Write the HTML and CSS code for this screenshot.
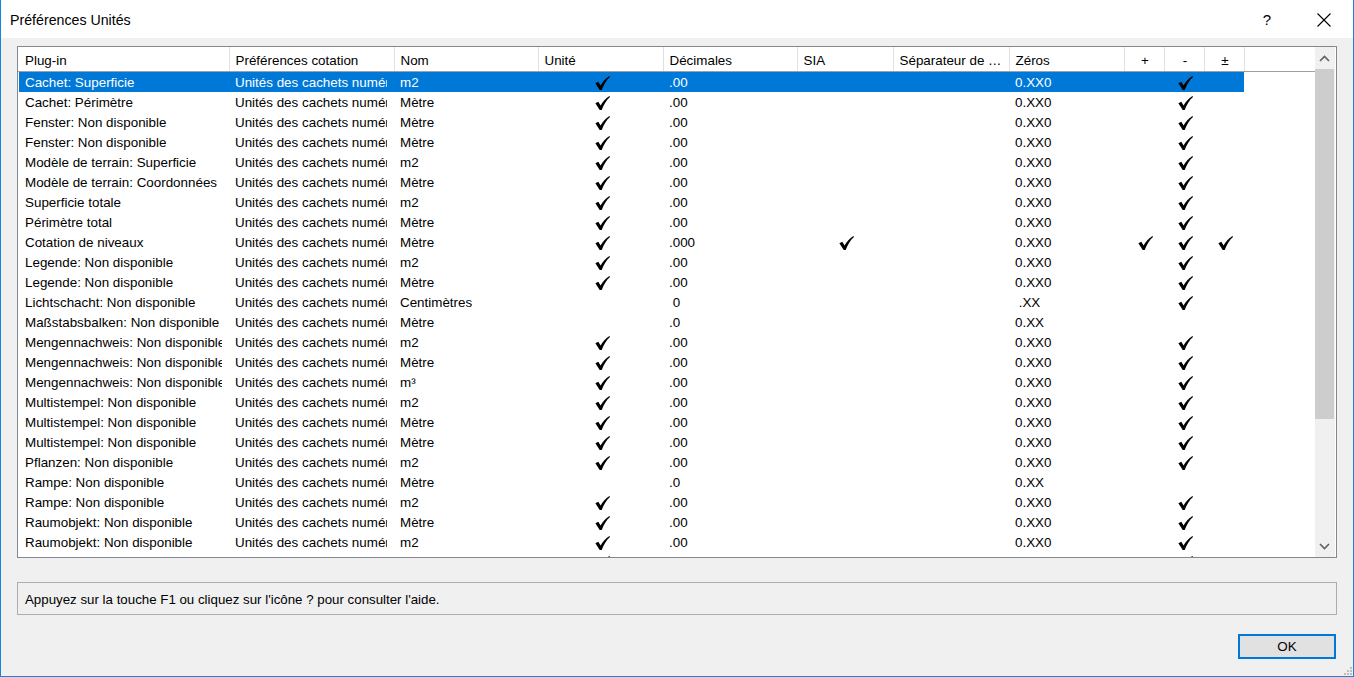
FILE: index.html
```html
<!DOCTYPE html>
<html lang="fr">
<head>
<meta charset="utf-8">
<title>Préférences Unités</title>
<link rel="stylesheet" href="styles.css">
</head>
<body>
<svg class="defs" width="0" height="0" aria-hidden="true">
  <symbol id="chk" viewBox="0 0 15 14">
    <path d="M0.4,7.3 L3.3,5.7 L5.6,9.4 C7.7,5.6 10.6,2.3 14.4,0 L15,0.9 C11.3,4.1 8.7,8.5 6.7,14 L4.7,14 Z"/>
  </symbol>
</svg>
<div class="window">
  <div class="titlebar">
    <span class="title">Préférences Unités</span>
    <span class="help">?</span>
    <svg class="close" width="14" height="14" viewBox="0 0 14 14"><path d="M0.5,0.5 L13.5,13.5 M13.5,0.5 L0.5,13.5" stroke="#000" stroke-width="1.1" fill="none"/></svg>
  </div>
  <div class="content">
    <div class="listbox">
      <div class="grid">
        <table class="tbl">
          <colgroup>
            <col class="c1"><col class="c2"><col class="c3"><col class="c4"><col class="c5"><col class="c6"><col class="c7"><col class="c8"><col class="c9"><col class="c9"><col class="c9"><col class="cf">
          </colgroup>
          <thead>
            <tr>
              <th>Plug-in</th><th>Préférences cotation</th><th>Nom</th><th>Unité</th><th>Décimales</th><th>SIA</th><th><span class="ell">Séparateur de milliers</span></th><th>Zéros</th><th class="ctr">+</th><th class="ctr">-</th><th class="ctr">±</th><th class="fill"></th>
            </tr>
          </thead>
          <tbody>
            <tr class="sel"><td><div>Cachet: Superficie</div></td><td><div>Unités des cachets numériques</div></td><td><div>m2</div></td><td class="k"><svg class="ck"><use href="#chk"/></svg></td><td><div>.00</div></td><td></td><td></td><td><div>0.XX0</div></td><td></td><td class="k"><svg class="ck"><use href="#chk"/></svg></td><td></td><td class="nf"></td></tr>
            <tr><td><div>Cachet: Périmètre</div></td><td><div>Unités des cachets numériques</div></td><td><div>Mètre</div></td><td class="k"><svg class="ck"><use href="#chk"/></svg></td><td><div>.00</div></td><td></td><td></td><td><div>0.XX0</div></td><td></td><td class="k"><svg class="ck"><use href="#chk"/></svg></td><td></td><td></td></tr>
            <tr><td><div>Fenster: Non disponible</div></td><td><div>Unités des cachets numériques</div></td><td><div>Mètre</div></td><td class="k"><svg class="ck"><use href="#chk"/></svg></td><td><div>.00</div></td><td></td><td></td><td><div>0.XX0</div></td><td></td><td class="k"><svg class="ck"><use href="#chk"/></svg></td><td></td><td></td></tr>
            <tr><td><div>Fenster: Non disponible</div></td><td><div>Unités des cachets numériques</div></td><td><div>Mètre</div></td><td class="k"><svg class="ck"><use href="#chk"/></svg></td><td><div>.00</div></td><td></td><td></td><td><div>0.XX0</div></td><td></td><td class="k"><svg class="ck"><use href="#chk"/></svg></td><td></td><td></td></tr>
            <tr><td><div>Modèle de terrain: Superficie</div></td><td><div>Unités des cachets numériques</div></td><td><div>m2</div></td><td class="k"><svg class="ck"><use href="#chk"/></svg></td><td><div>.00</div></td><td></td><td></td><td><div>0.XX0</div></td><td></td><td class="k"><svg class="ck"><use href="#chk"/></svg></td><td></td><td></td></tr>
            <tr><td><div>Modèle de terrain: Coordonnées</div></td><td><div>Unités des cachets numériques</div></td><td><div>Mètre</div></td><td class="k"><svg class="ck"><use href="#chk"/></svg></td><td><div>.00</div></td><td></td><td></td><td><div>0.XX0</div></td><td></td><td class="k"><svg class="ck"><use href="#chk"/></svg></td><td></td><td></td></tr>
            <tr><td><div>Superficie totale</div></td><td><div>Unités des cachets numériques</div></td><td><div>m2</div></td><td class="k"><svg class="ck"><use href="#chk"/></svg></td><td><div>.00</div></td><td></td><td></td><td><div>0.XX0</div></td><td></td><td class="k"><svg class="ck"><use href="#chk"/></svg></td><td></td><td></td></tr>
            <tr><td><div>Périmètre total</div></td><td><div>Unités des cachets numériques</div></td><td><div>Mètre</div></td><td class="k"><svg class="ck"><use href="#chk"/></svg></td><td><div>.00</div></td><td></td><td></td><td><div>0.XX0</div></td><td></td><td class="k"><svg class="ck"><use href="#chk"/></svg></td><td></td><td></td></tr>
            <tr><td><div>Cotation de niveaux</div></td><td><div>Unités des cachets numériques</div></td><td><div>Mètre</div></td><td class="k"><svg class="ck"><use href="#chk"/></svg></td><td><div>.000</div></td><td class="k"><svg class="ck"><use href="#chk"/></svg></td><td></td><td><div>0.XX0</div></td><td class="k"><svg class="ck"><use href="#chk"/></svg></td><td class="k"><svg class="ck"><use href="#chk"/></svg></td><td class="k"><svg class="ck"><use href="#chk"/></svg></td><td></td></tr>
            <tr><td><div>Legende: Non disponible</div></td><td><div>Unités des cachets numériques</div></td><td><div>m2</div></td><td class="k"><svg class="ck"><use href="#chk"/></svg></td><td><div>.00</div></td><td></td><td></td><td><div>0.XX0</div></td><td></td><td class="k"><svg class="ck"><use href="#chk"/></svg></td><td></td><td></td></tr>
            <tr><td><div>Legende: Non disponible</div></td><td><div>Unités des cachets numériques</div></td><td><div>Mètre</div></td><td class="k"><svg class="ck"><use href="#chk"/></svg></td><td><div>.00</div></td><td></td><td></td><td><div>0.XX0</div></td><td></td><td class="k"><svg class="ck"><use href="#chk"/></svg></td><td></td><td></td></tr>
            <tr><td><div>Lichtschacht: Non disponible</div></td><td><div>Unités des cachets numériques</div></td><td><div>Centimètres</div></td><td></td><td><div>&nbsp;0</div></td><td></td><td></td><td><div>&nbsp;.XX</div></td><td></td><td class="k"><svg class="ck"><use href="#chk"/></svg></td><td></td><td></td></tr>
            <tr><td><div>Maßstabsbalken: Non disponible</div></td><td><div>Unités des cachets numériques</div></td><td><div>Mètre</div></td><td></td><td><div>.0</div></td><td></td><td></td><td><div>0.XX</div></td><td></td><td></td><td></td><td></td></tr>
            <tr><td><div>Mengennachweis: Non disponible</div></td><td><div>Unités des cachets numériques</div></td><td><div>m2</div></td><td class="k"><svg class="ck"><use href="#chk"/></svg></td><td><div>.00</div></td><td></td><td></td><td><div>0.XX0</div></td><td></td><td class="k"><svg class="ck"><use href="#chk"/></svg></td><td></td><td></td></tr>
            <tr><td><div>Mengennachweis: Non disponible</div></td><td><div>Unités des cachets numériques</div></td><td><div>Mètre</div></td><td class="k"><svg class="ck"><use href="#chk"/></svg></td><td><div>.00</div></td><td></td><td></td><td><div>0.XX0</div></td><td></td><td class="k"><svg class="ck"><use href="#chk"/></svg></td><td></td><td></td></tr>
            <tr><td><div>Mengennachweis: Non disponible</div></td><td><div>Unités des cachets numériques</div></td><td><div>m³</div></td><td class="k"><svg class="ck"><use href="#chk"/></svg></td><td><div>.00</div></td><td></td><td></td><td><div>0.XX0</div></td><td></td><td class="k"><svg class="ck"><use href="#chk"/></svg></td><td></td><td></td></tr>
            <tr><td><div>Multistempel: Non disponible</div></td><td><div>Unités des cachets numériques</div></td><td><div>m2</div></td><td class="k"><svg class="ck"><use href="#chk"/></svg></td><td><div>.00</div></td><td></td><td></td><td><div>0.XX0</div></td><td></td><td class="k"><svg class="ck"><use href="#chk"/></svg></td><td></td><td></td></tr>
            <tr><td><div>Multistempel: Non disponible</div></td><td><div>Unités des cachets numériques</div></td><td><div>Mètre</div></td><td class="k"><svg class="ck"><use href="#chk"/></svg></td><td><div>.00</div></td><td></td><td></td><td><div>0.XX0</div></td><td></td><td class="k"><svg class="ck"><use href="#chk"/></svg></td><td></td><td></td></tr>
            <tr><td><div>Multistempel: Non disponible</div></td><td><div>Unités des cachets numériques</div></td><td><div>Mètre</div></td><td class="k"><svg class="ck"><use href="#chk"/></svg></td><td><div>.00</div></td><td></td><td></td><td><div>0.XX0</div></td><td></td><td class="k"><svg class="ck"><use href="#chk"/></svg></td><td></td><td></td></tr>
            <tr><td><div>Pflanzen: Non disponible</div></td><td><div>Unités des cachets numériques</div></td><td><div>m2</div></td><td class="k"><svg class="ck"><use href="#chk"/></svg></td><td><div>.00</div></td><td></td><td></td><td><div>0.XX0</div></td><td></td><td class="k"><svg class="ck"><use href="#chk"/></svg></td><td></td><td></td></tr>
            <tr><td><div>Rampe: Non disponible</div></td><td><div>Unités des cachets numériques</div></td><td><div>Mètre</div></td><td></td><td><div>.0</div></td><td></td><td></td><td><div>0.XX</div></td><td></td><td></td><td></td><td></td></tr>
            <tr><td><div>Rampe: Non disponible</div></td><td><div>Unités des cachets numériques</div></td><td><div>m2</div></td><td class="k"><svg class="ck"><use href="#chk"/></svg></td><td><div>.00</div></td><td></td><td></td><td><div>0.XX0</div></td><td></td><td class="k"><svg class="ck"><use href="#chk"/></svg></td><td></td><td></td></tr>
            <tr><td><div>Raumobjekt: Non disponible</div></td><td><div>Unités des cachets numériques</div></td><td><div>Mètre</div></td><td class="k"><svg class="ck"><use href="#chk"/></svg></td><td><div>.00</div></td><td></td><td></td><td><div>0.XX0</div></td><td></td><td class="k"><svg class="ck"><use href="#chk"/></svg></td><td></td><td></td></tr>
            <tr><td><div>Raumobjekt: Non disponible</div></td><td><div>Unités des cachets numériques</div></td><td><div>m2</div></td><td class="k"><svg class="ck"><use href="#chk"/></svg></td><td><div>.00</div></td><td></td><td></td><td><div>0.XX0</div></td><td></td><td class="k"><svg class="ck"><use href="#chk"/></svg></td><td></td><td></td></tr>
            <tr><td></td><td></td><td></td><td class="k"><svg class="ck"><use href="#chk"/></svg></td><td></td><td></td><td></td><td></td><td></td><td class="k"><svg class="ck"><use href="#chk"/></svg></td><td></td><td></td></tr>
          </tbody>
        </table>
      </div>
      <div class="vscroll">
        <div class="arrow"><svg width="11" height="7" viewBox="0 0 11 7"><path d="M1,6 L5.5,1.5 L10,6" stroke="#606060" stroke-width="1.6" fill="none"/></svg></div>
        <div class="track"><div class="thumb"></div></div>
        <div class="arrow"><svg width="11" height="7" viewBox="0 0 11 7"><path d="M1,1 L5.5,5.5 L10,1" stroke="#606060" stroke-width="1.6" fill="none"/></svg></div>
      </div>
    </div>
    <div class="status">Appuyez sur la touche F1 ou cliquez sur l'icône ? pour consulter l'aide.</div>
    <div class="buttons">
      <button class="ok">OK</button>
    </div>
  </div>
  <svg class="grip" width="8" height="8" viewBox="0 0 8 8"><g fill="#bcbcbc"><rect x="6" y="0" width="2" height="2"/><rect x="3" y="3" width="2" height="2"/><rect x="6" y="3" width="2" height="2"/><rect x="0" y="6" width="2" height="2"/><rect x="3" y="6" width="2" height="2"/><rect x="6" y="6" width="2" height="2"/></g></svg>
</div>
</body>
</html>
```
FILE: styles.css
```css
html, body {
  margin: 0;
  padding: 0;
}
body {
  font-family: "Liberation Sans", Arial, sans-serif;
  font-size: 13.4px;
  color: #000;
  background: #f0f0f0;
}
.defs {
  position: absolute;
  width: 0;
  height: 0;
}
.window {
  position: relative;
  width: 1354px;
  height: 677px;
  box-sizing: border-box;
  border: 1px solid #1883d7;
  border-top: none;
  background: #f0f0f0;
  display: flex;
  flex-direction: column;
}
.titlebar {
  height: 38px;
  flex: 0 0 38px;
  background: #fff;
  display: flex;
  align-items: center;
  padding-left: 9px;
  padding-top: 1px;
  box-sizing: border-box;
}
.title {
  font-size: 14.2px;
  flex: 1;
}
.help {
  font-size: 15px;
  margin-right: 46px;
}
.close {
  margin-right: 22px;
}
.content {
  flex: 1;
  display: flex;
  flex-direction: column;
  padding: 8px 16px 0 16px;
}
.listbox {
  height: 512px;
  box-sizing: border-box;
  border: 1px solid #828790;
  background: #fff;
  display: flex;
  overflow: hidden;
}
.grid {
  width: 1297px;
  flex: 0 0 1297px;
  overflow: hidden;
}
.tbl {
  table-layout: fixed;
  border-collapse: collapse;
  width: 1297px;
}
.c1 { width: 211px; }
.c2 { width: 165px; }
.c3 { width: 144px; }
.c4 { width: 125px; }
.c5 { width: 134px; }
.c6 { width: 96px; }
.c7 { width: 116px; }
.c8 { width: 115px; }
.c9 { width: 40px; }
.cf { width: 71px; }
.tbl th {
  height: 24px;
  padding: 3px 0 0 6px;
  font-weight: normal;
  text-align: left;
  white-space: nowrap;
  overflow: hidden;
  border-right: 1px solid #e0e0e0;
  border-bottom: 1px solid #a0a0a0;
  background: #fff;
  vertical-align: middle;
  box-sizing: border-box;
}
.tbl th:first-child {
  padding-left: 7px;
}
.tbl th.ctr {
  text-align: center;
  padding: 3px 0 0 2px;
}
.tbl th.fill {
  border-right: none;
}
.ell {
  display: block;
  width: 104px;
  overflow: hidden;
  text-overflow: ellipsis;
  white-space: nowrap;
}
.tbl td {
  height: 20px;
  padding: 0 0 0 6px;
  vertical-align: top;
  white-space: nowrap;
  overflow: hidden;
  box-sizing: border-box;
}
.tbl td:first-child {
  padding-left: 7px;
}
.tbl td > div {
  overflow: hidden;
  white-space: nowrap;
  margin-right: 7px;
  padding-top: 2px;
  line-height: 18px;
}
.tbl td.k {
  text-align: center;
  padding: 0 0 0 3px;
}
.ck {
  display: block;
  width: 15px;
  height: 14px;
  margin: 4px auto 0 auto;
  fill: #000;
}
.tbl tr.sel td {
  background: #0078d7;
  color: #fff;
}
.tbl tr.sel td:first-child {
  box-shadow: inset 1px 0 0 #fff;
}
.tbl tr.sel td.nf {
  background: #fff;
}
.vscroll {
  width: 20px;
  flex: 0 0 20px;
  background: #f0f0f0;
  display: flex;
  flex-direction: column;
}
.arrow {
  height: 22px;
  flex: 0 0 22px;
  display: flex;
  align-items: center;
  justify-content: center;
  padding-right: 1px;
}
.track {
  flex: 1;
}
.thumb {
  height: 350px;
  width: 19px;
  background: #cdcdcd;
}
.status {
  margin-top: 24px;
  height: 33px;
  box-sizing: border-box;
  border: 1px solid #adadad;
  padding-left: 7px;
  padding-top: 1px;
  display: flex;
  align-items: center;
  font-size: 13.3px;
}
.buttons {
  display: flex;
  justify-content: flex-end;
  padding-top: 19px;
  padding-right: 1px;
}
.ok {
  width: 98px;
  height: 25px;
  box-sizing: border-box;
  border: 2px solid #0078d7;
  background: #e1e1e1;
  font-family: "Liberation Sans", Arial, sans-serif;
  font-size: 13.4px;
  color: #000;
  padding: 0;
}
.grip {
  position: absolute;
  right: 1px;
  bottom: 1px;
}
```
